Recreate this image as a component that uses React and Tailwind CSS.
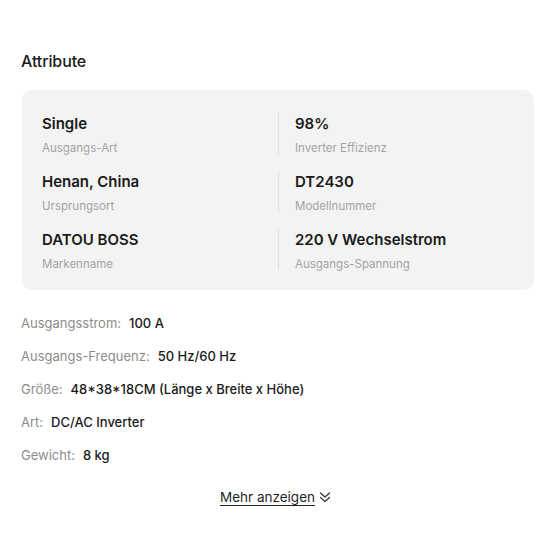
import React from 'react';

const attrs = [
  { value: 'Single', label: 'Ausgangs-Art' },
  { value: '98%', label: 'Inverter Effizienz' },
  { value: 'Henan, China', label: 'Ursprungsort' },
  { value: 'DT2430', label: 'Modellnummer' },
  { value: 'DATOU BOSS', label: 'Markenname' },
  { value: '220 V Wechselstrom', label: 'Ausgangs-Spannung' },
];

const specs = [
  ['Ausgangsstrom:', '100 A'],
  ['Ausgangs-Frequenz:', '50 Hz/60 Hz'],
  ['Größe:', '48*38*18CM (Länge x Breite x Höhe)'],
  ['Art:', 'DC/AC Inverter'],
  ['Gewicht:', '8 kg'],
];

export default function App() {
  return (
    <div className="w-[550px] h-[550px] bg-white font-['Inter',sans-serif] text-[#1a1a1a] pl-[21px] pr-[16px] pt-[50px]">
      {/* Title */}
      <h2 className="text-[16px] leading-[22px] font-medium tracking-[-0.1px]">Attribute</h2>

      {/* Attribute card */}
      <div className="mt-[18px] ml-px bg-[#f3f3f3] rounded-[10px] px-5 pt-[23px] pb-[20px] grid grid-cols-2 gap-y-[17px]">
        {attrs.map((a, i) => (
          <div
            key={a.label}
            className={i % 2 === 1 ? 'border-l border-[#e0e0e0] pl-4' : ''}
          >
            <div className="text-[15px] leading-[22px] font-semibold">{a.value}</div>
            <div className="mt-[7px] text-[11.5px] leading-[12px] text-[#a3a3a3]">{a.label}</div>
          </div>
        ))}
      </div>

      {/* Spec list */}
      <div className="mt-[23px] flex flex-col gap-[13px]">
        {specs.map(([k, v]) => (
          <div key={k} className="flex items-center gap-2 text-[13px] leading-[20px]">
            <span className="text-[#8c8c8c]">{k}</span>
            <span className="font-medium text-[#1a1a1a]">{v}</span>
          </div>
        ))}
      </div>

      {/* Show more */}
      <div className="mt-[22px] flex justify-center pr-[3px]">
        <button className="flex items-center gap-[3px] text-[13.5px] leading-[20px] text-[#1f1f1f]">
          <span className="underline underline-offset-[3px]">Mehr anzeigen</span>
          <svg width="14" height="14" viewBox="0 0 14 14" fill="none" stroke="#333" strokeWidth="1.2" strokeLinecap="round" strokeLinejoin="round">
            <path d="M2.5 3 L7 7 L11.5 3" />
            <path d="M2.5 7.5 L7 11.5 L11.5 7.5" />
          </svg>
        </button>
      </div>
    </div>
  );
}
